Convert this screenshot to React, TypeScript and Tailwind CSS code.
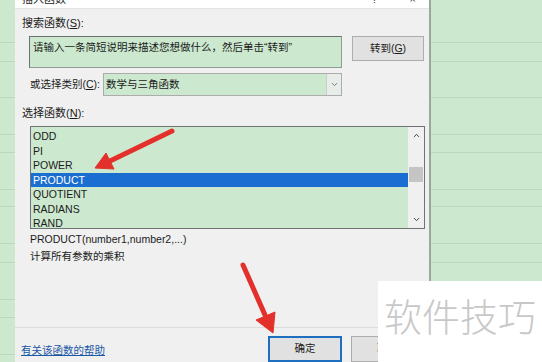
import { ChevronDown, ChevronUp } from "lucide-react";

const font = { fontFamily: '"Liberation Sans", "Noto Sans CJK SC", sans-serif' };

const funcs = ["ODD", "PI", "POWER", "PRODUCT", "QUOTIENT", "RADIANS", "RAND"];

// faint spreadsheet grid rows behind the dialog
const gridRows = [43, 19, 36, 37, 18, 37, 17, 37, 19, 37, 18, 37];

const Grid = ({ width }: { width: string }) => (
  <div className={`${width} h-[362px] bg-[#cce8cf] flex flex-col overflow-hidden`}>
    {gridRows.map((h, i) => (
      <div key={i} className="shrink-0 border-b border-[#b9d8bd]" style={{ height: h }} />
    ))}
  </div>
);

const U = ({ children }: { children: string }) => <span className="underline">{children}</span>;

export default function App() {
  return (
    <div className="relative w-[542px] h-[362px] overflow-hidden flex text-[10.5px] text-[#1b1b1b]" style={font}>
      <Grid width="w-[15px]" />

      {/* dialog */}
      <div className="w-[416px] h-[362px] shrink-0 bg-[#f0f0f0] border-r-2 border-[#98a89b] flex flex-col">
        <div className="h-[10px] bg-white border-b border-[#e3e3e3] overflow-hidden flex justify-between px-[7px]">
          <span className="-mt-[9px] text-[11px]">插入函数</span>
          <span className="-mt-[9px] text-[11px] flex gap-[32px] pr-[6px] text-[#444]">
            <span>?</span>
            <span>×</span>
          </span>
        </div>

        <div className="mt-[7px] ml-[7px] h-[14px] leading-[14px] text-[11px]">
          搜索函数(<U>S</U>):
        </div>

        <div className="mt-[6px] flex">
          <div className="ml-[14px] w-[313px] h-[32px] bg-[#cce8cf] border border-[#8f9a91] border-t-[#6e6e6e] border-l-[#6e6e6e] px-[3px] pt-[3px] leading-[14px]">
            请输入一条简短说明来描述您想做什么，然后单击“转到”
          </div>
          <div className="ml-[10px] w-[72px] h-[25px] bg-[#e1e1e1] border border-[#adadad] flex items-center justify-center">
            转到(<U>G</U>)
          </div>
        </div>

        <div className="mt-[5px] flex items-center h-[23px]">
          <div className="ml-[15px] w-[73px]">
            或选择类别(<U>C</U>):
          </div>
          <div className="w-[239px] h-[23px] bg-[#cce8cf] border border-[#acacac] flex">
            <div className="flex-1 flex items-center pl-[2px]">数学与三角函数</div>
            <div className="w-[15px] bg-[#e8ede9] border-l border-[#c8cfc9] flex items-center justify-center">
              <ChevronDown size={9} strokeWidth={2} className="text-[#555]" />
            </div>
          </div>
        </div>

        <div className="mt-[10px] ml-[7px] h-[14px] leading-[14px] text-[11px]">
          选择函数(<U>N</U>):
        </div>

        <div className="mt-[6px] ml-[15px] w-[395px] h-[103px] border border-[#6f7378] bg-[#cce8cf] flex">
          <div className="flex-1 pt-[2px]">
            {funcs.map((f) => (
              <div
                key={f}
                className={`h-[14.5px] leading-[14.5px] pl-[2px] ${f === "PRODUCT" ? "bg-[#1b6ed1] text-white" : ""}`}
              >
                {f}
              </div>
            ))}
          </div>
          <div className="w-[16px] bg-[#f0f0f0] flex flex-col items-center justify-between py-[4px]">
            <ChevronUp size={9} strokeWidth={2.5} className="text-[#333]" />
            <div className="w-[14px] h-[15px] bg-[#c5c5c5] -mt-[6px]" />
            <ChevronDown size={9} strokeWidth={2.5} className="text-[#333]" />
          </div>
        </div>

        <div className="mt-[3px] ml-[15px] h-[14px] leading-[14px]">PRODUCT(number1,number2,...)</div>
        <div className="mt-[3px] ml-[15px] h-[14px] leading-[14px]">计算所有参数的乘积</div>

        <div className="mt-[64px] h-px bg-[#dcdcdc]" />

        <div className="flex items-start">
          <div className="ml-[6px] mt-[15px] text-[#1a57a6] underline w-[247px]">有关该函数的帮助</div>
          <div className="mt-[8px] w-[74px] h-[26px] bg-[#e1e1e1] border-2 border-[#1e6fc0] flex items-center justify-center">
            确定
          </div>
          <div className="mt-[8px] ml-[9px] w-[73px] h-[26px] bg-[#e1e1e1] border border-[#adadad] flex items-center justify-center">
            取消
          </div>
        </div>
      </div>

      <Grid width="flex-1" />

      {/* watermark */}
      <div className="absolute left-[378px] top-[281px] right-0 bottom-0 bg-white pl-[6px] pt-[15px]">
        <div className="text-[38px] leading-[38px] font-light text-[#c8c8c8]" style={{ fontFamily: '"Noto Sans CJK SC", sans-serif' }}>
          软件技巧
        </div>
      </div>

      {/* red arrows */}
      <svg className="absolute inset-0 pointer-events-none" width="542" height="362">
        <g fill="#e3302b" stroke="#e3302b">
          <line x1="172" y1="131" x2="110" y2="161" strokeWidth="5" strokeLinecap="round" />
          <polygon points="95,168 114,169 106,153" strokeWidth="1" strokeLinejoin="round" />
          <line x1="243" y1="265" x2="265" y2="315" strokeWidth="5" strokeLinecap="round" />
          <polygon points="273,333 275,312 256,320" strokeWidth="1" strokeLinejoin="round" />
        </g>
      </svg>
    </div>
  );
}
